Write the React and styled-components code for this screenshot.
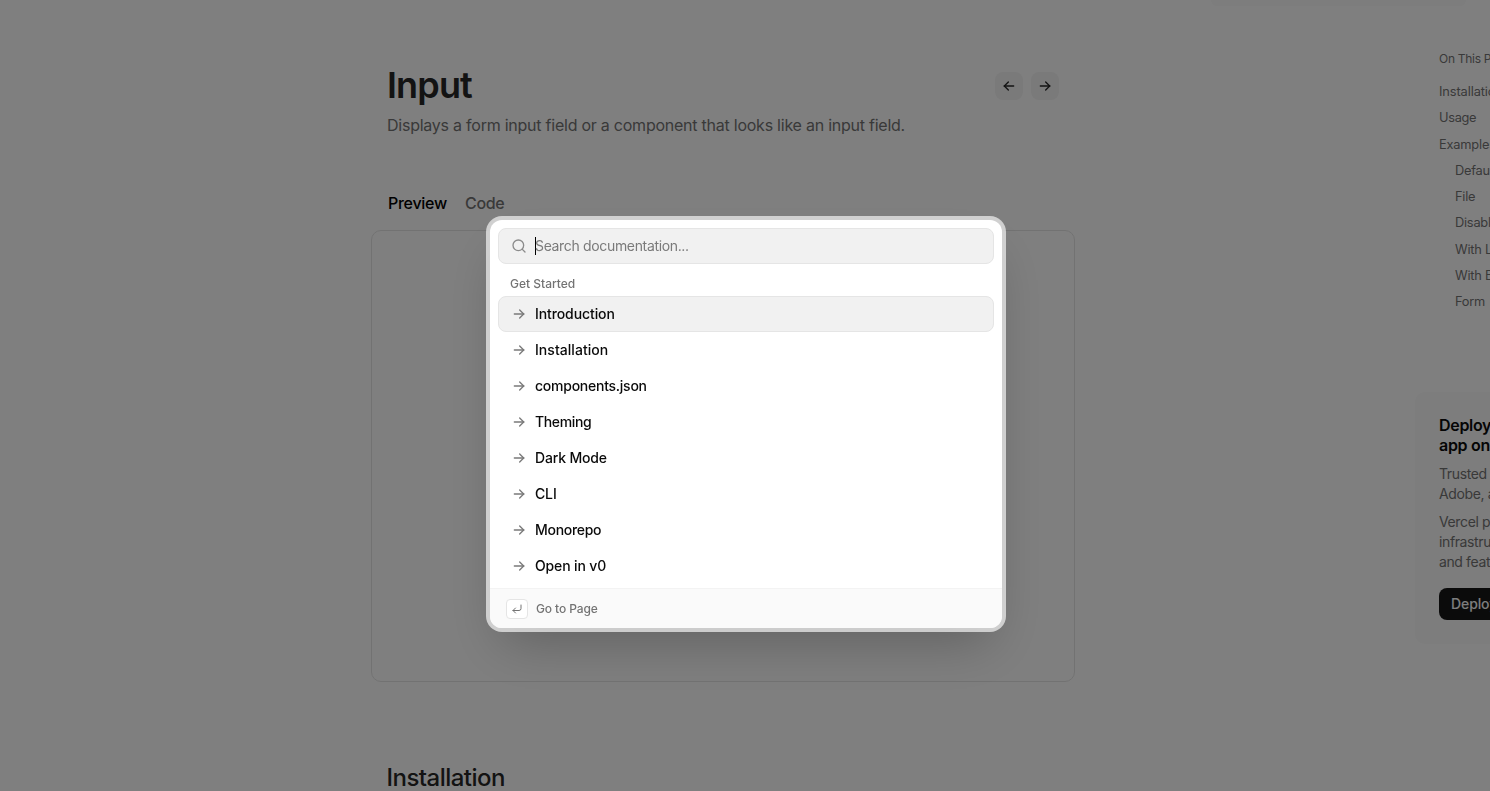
import React from "react";
import styled, { createGlobalStyle } from "styled-components";
import { CornerDownLeft, Search } from "lucide-react";
import { TbArrowLeft, TbArrowRight } from "react-icons/tb";

const GlobalStyle = createGlobalStyle`
  *, *::before, *::after { box-sizing: border-box; }
  body {
    margin: 0;
    background: #fff;
    color: #0a0a0a;
    overflow: hidden;
    font-family: Inter, "Liberation Sans", sans-serif;
  }
  h1, h2, h3, p, ul { margin: 0; padding: 0; }
`;

const Page = styled.div`
  height: 791px;
  overflow: hidden;
`;

const TopBar = styled.header`
  height: 6px;
  padding-left: 1211px;
`;

const TopPanel = styled.div`
  width: 255px;
  height: 6px;
  border-radius: 0 0 8px 8px;
  background: #fafafa;
`;

const Columns = styled.div`
  display: grid;
  grid-template-columns: 704px 288px;
  column-gap: 340px;
  padding-left: 371px;
`;

const Main = styled.main`
  padding-top: 59px;
`;

const TitleRow = styled.div`
  display: flex;
  justify-content: space-between;
  align-items: flex-start;
  height: 41px;
  padding: 0 16px;
`;

const Title = styled.h1`
  font-size: 36px;
  line-height: 40px;
  font-weight: 600;
  letter-spacing: -0.85px;
  color: #262626;
`;

const PagerGroup = styled.div`
  display: flex;
  gap: 8px;
  padding-top: 7px;
`;

const PagerButton = styled.button`
  display: grid;
  place-items: center;
  width: 28px;
  height: 28px;
  padding: 0;
  border: 0;
  border-radius: 8px;
  background: #f5f5f5;
  color: #262626;
`;

const Lead = styled.p`
  margin-top: 7px;
  padding-left: 16px;
  font-size: 16px;
  line-height: 25px;
  letter-spacing: -0.24px;
  color: #737373;
`;

const TabList = styled.div`
  display: flex;
  gap: 18px;
  margin-top: 53px;
  padding-left: 17px;
  height: 24px;
`;

const Tab = styled.span`
  font-size: 16px;
  line-height: 24px;
  font-weight: 500;
  letter-spacing: -0.28px;
  color: ${(p) => (p.$active ? "#000" : "#737373")};
`;

const PreviewPane = styled.section`
  height: 452px;
  margin-top: 15px;
  border: 1px solid #e5e5e5;
  border-radius: 10px;
`;

const SectionTitle = styled.h2`
  margin-top: 80px;
  padding-left: 15.5px;
  font-size: 24px;
  line-height: 32px;
  font-weight: 500;
  letter-spacing: -0.53px;
  color: #262626;
`;

const Aside = styled.aside`
  padding-top: 40px;
  white-space: nowrap;
`;

const Toc = styled.nav`
  padding-left: 24px;
  color: #737373;
`;

const TocHeading = styled.p`
  height: 33px;
  font-size: 12px;
  line-height: 25px;
  letter-spacing: -0.28px;
`;

const TocLink = styled.p`
  padding-left: ${(p) => (p.$nested ? "16px" : "0")};
  font-size: 12.8px;
  line-height: 26.25px;
  letter-spacing: ${(p) => p.$tracking ?? -0.23}px;
`;

const DeployCard = styled.section`
  height: 252px;
  margin-top: 77px;
  padding: 23px 24px 24px;
  border-radius: 10px;
  background: #fafafa;
`;

const DeployTitle = styled.h3`
  height: 41px;
  font-size: 16px;
  line-height: 20px;
  font-weight: 600;
  letter-spacing: -0.31px;
  color: #0a0a0a;
`;

const DeployText = styled.p`
  margin-top: 8px;
  font-size: 14px;
  line-height: 20px;
  letter-spacing: -0.38px;
  color: #737373;
`;

const DeployButton = styled.button`
  height: 32px;
  margin-top: 16px;
  padding: 0 12px;
  border: 0;
  border-radius: 8px;
  background: #171717;
  color: #fafafa;
  font: 500 14px/20px Inter, "Liberation Sans", sans-serif;
  letter-spacing: -0.1px;
`;

const Overlay = styled.div`
  position: fixed;
  inset: 0;
  display: flex;
  justify-content: center;
  align-items: flex-start;
  padding-top: 220px;
  padding-left: 2px;
  background: rgba(0, 0, 0, 0.5);
`;

const Dialog = styled.div`
  display: flex;
  flex-direction: column;
  width: 512px;
  height: 408px;
  border-radius: 12px;
  background: #fff;
  background-clip: padding-box;
  box-shadow: 0 0 0 4px rgba(229, 229, 229, 0.8), 0 25px 50px -12px rgba(0, 0, 0, 0.25);
`;

const DialogBody = styled.div`
  flex: 1;
  padding: 8px 8px 0;
`;

const SearchField = styled.div`
  display: flex;
  align-items: center;
  gap: 8px;
  height: 36px;
  padding: 0 12px;
  border: 1px solid #e5e5e5;
  border-radius: 8px;
  background: #f1f1f1;
  color: #8b8b8b;
`;

const Placeholder = styled.span`
  display: flex;
  align-items: center;
  color: #7a7a7a;
  font-size: 14px;
  line-height: 18px;
  letter-spacing: -0.34px;
`;

const Hint = styled.span`
  padding-bottom: 1px;
`;

const Caret = styled.span`
  width: 1px;
  height: 18px;
  margin-right: -1px;
  background: #000;
`;

const GroupLabel = styled.p`
  height: 32px;
  padding: 12px 12px 0;
  font-size: 12px;
  line-height: 16px;
  font-weight: 500;
  color: #737373;
`;

const Item = styled.div`
  display: flex;
  align-items: center;
  gap: 8px;
  height: 36px;
  padding: 0 12px;
  border: 1px solid ${(p) => (p.$selected ? "#e5e5e5" : "transparent")};
  border-radius: 8px;
  background: ${(p) => (p.$selected ? "#f1f1f1" : "transparent")};
  color: #7a7a7a;
`;

const ItemLabel = styled.span`
  font-size: 14px;
  line-height: 20px;
  font-weight: 500;
  letter-spacing: ${(p) => p.$tracking}px;
  color: #0a0a0a;
`;

const Footer = styled.footer`
  display: flex;
  align-items: center;
  gap: 8px;
  height: 40px;
  padding: 1px 16px 0;
  border-top: 1px solid #f3f3f3;
  border-radius: 0 0 12px 12px;
  background: #fafafa;
  color: #737373;
`;

const FooterLabel = styled.span`
  font-size: 12px;
  line-height: 16px;
  font-weight: 500;
  letter-spacing: -0.1px;
`;

const Key = styled.kbd`
  display: grid;
  place-items: center;
  width: 22px;
  height: 20px;
  border: 1px solid #e5e5e5;
  border-radius: 4px;
  background: #fff;
`;

const sections = [
  ["Installation", false, -0.1],
  ["Usage", false, -0.3],
  ["Examples", false, -0.18],
  ["Default", true],
  ["File", true],
  ["Disabled", true],
  ["With Label", true],
  ["With Button", true],
  ["Form", true],
];

const pages = [
  ["Introduction", -0.1],
  ["Installation", 0.04],
  ["components.json", -0.25],
  ["Theming", -0.37],
  ["Dark Mode", -0.17],
  ["CLI", -0.15],
  ["Monorepo", -0.3],
  ["Open in v0", -0.14],
];

export default function App() {
  return (
    <>
      <GlobalStyle />
      <Page>
        <TopBar>
          <TopPanel />
        </TopBar>
        <Columns>
          <Main>
            <TitleRow>
              <Title>Input</Title>
              <PagerGroup>
                <PagerButton aria-label="Previous page">
                  <TbArrowLeft size={16} />
                </PagerButton>
                <PagerButton aria-label="Next page">
                  <TbArrowRight size={16} />
                </PagerButton>
              </PagerGroup>
            </TitleRow>
            <Lead>Displays a form input field or a component that looks like an input field.</Lead>
            <TabList>
              <Tab $active>Preview</Tab>
              <Tab>Code</Tab>
            </TabList>
            <PreviewPane />
            <SectionTitle>Installation</SectionTitle>
          </Main>
          <Aside>
            <Toc>
              <TocHeading>On This Page</TocHeading>
              {sections.map(([label, nested, tracking]) => (
                <TocLink key={label} $nested={nested} $tracking={tracking}>
                  {label}
                </TocLink>
              ))}
            </Toc>
            <DeployCard>
              <DeployTitle>
                Deploy your shadcn/ui
                <br />
                app on Vercel
              </DeployTitle>
              <DeployText>
                Trusted by OpenAI, Sonos,
                <br />
                Adobe, and more.
              </DeployText>
              <DeployText>
                Vercel provides tools and
                <br />
                infrastructure to deploy apps
                <br />
                and features at scale.
              </DeployText>
              <DeployButton>Deploy Now</DeployButton>
            </DeployCard>
          </Aside>
        </Columns>
      </Page>
      <Overlay>
        <Dialog role="dialog">
          <DialogBody>
            <SearchField>
              <Search size={16} />
              <Placeholder>
                <Caret />
                <Hint>Search documentation...</Hint>
              </Placeholder>
            </SearchField>
            <GroupLabel>Get Started</GroupLabel>
            {pages.map(([label, tracking], index) => (
              <Item key={label} $selected={index === 0}>
                <TbArrowRight size={16} />
                <ItemLabel $tracking={tracking}>{label}</ItemLabel>
              </Item>
            ))}
          </DialogBody>
          <Footer>
            <Key>
              <CornerDownLeft size={12} />
            </Key>
            <FooterLabel>Go to Page</FooterLabel>
          </Footer>
        </Dialog>
      </Overlay>
    </>
  );
}
